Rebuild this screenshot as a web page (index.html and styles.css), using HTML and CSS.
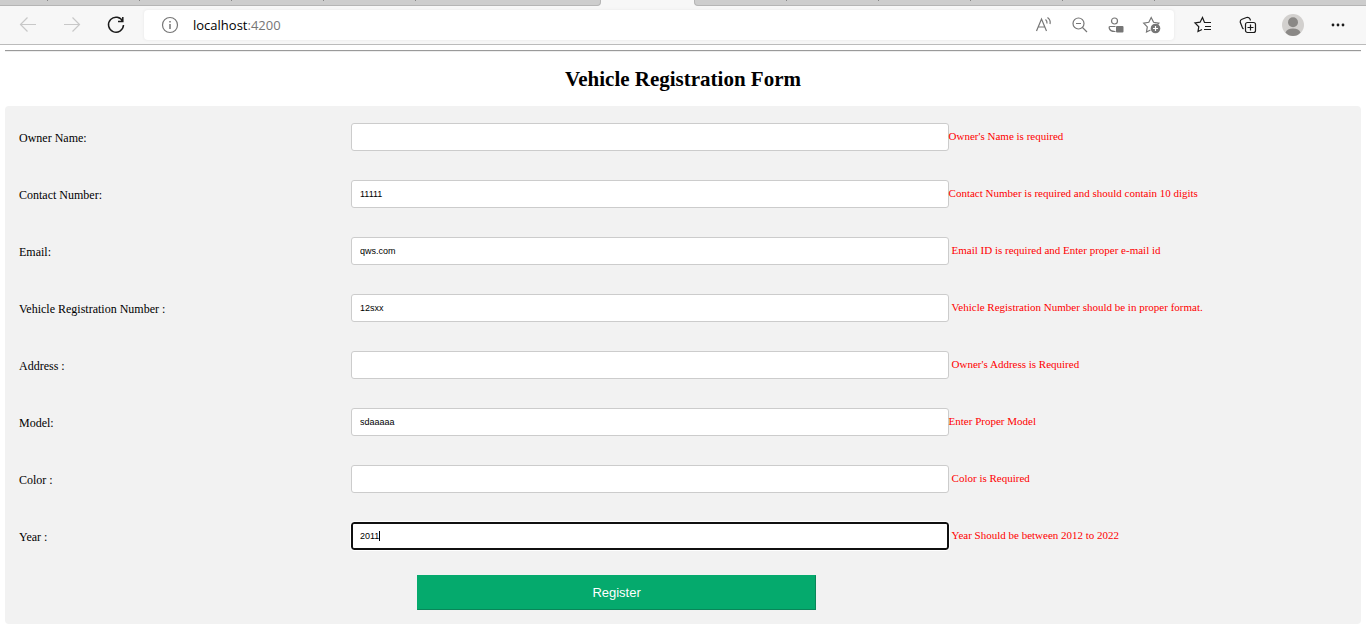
FILE: index.html
```html
<!DOCTYPE html>
<html lang="en">
<head>
<meta charset="utf-8">
<title>Vehicle Registration Form</title>
<link rel="stylesheet" href="styles.css">
</head>
<body>
<header class="browser">
  <div class="tabs">
    <div class="tab-group tab-group-left"><i class="tab tab-first"></i><i class="tab"></i><i class="tab"></i><i class="tab"></i><i class="tab"></i><i class="tab"></i></div>
    <div class="tab-active"></div>
    <div class="tab-group tab-group-right"><i class="tab"></i><i class="tab"></i><i class="tab"></i><i class="tab"></i><i class="tab"></i></div>
  </div>
  <div class="toolbar">
    <div class="nav">
      <button class="icon-btn muted" type="button" aria-label="Back"><svg width="20" height="20" viewBox="0 0 20 20"><path d="M18 9.500H2.500M9.500 2.500L2.500 9.500L9.500 16.500"/></svg></button>
      <button class="icon-btn muted" type="button" aria-label="Forward"><svg width="20" height="20" viewBox="0 0 20 20"><path d="M2 9.500H17.500M10.500 2.500L17.500 9.500L10.500 16.500"/></svg></button>
      <button class="icon-btn" type="button" aria-label="Refresh"><svg class="refresh" width="20" height="20" viewBox="0 0 20 20"><path d="M16.800 6.500A7.500 7.500 0 1 0 17.500 10M12 6.500H16.800V2"/></svg></button>
    </div>
    <div class="address">
      <button class="icon-btn gray" type="button" aria-label="Site information"><svg width="20" height="20" viewBox="0 0 20 20"><circle cx="10" cy="10" r="7.500"/><path d="M10 9V14M10 6V7.500" stroke-width="1.500"/></svg></button>
      <span class="url">localhost<span class="port">:4200</span></span>
      <div class="address-icons">
        <button class="icon-btn gray" type="button" aria-label="Read aloud"><svg width="20" height="20" viewBox="0 0 20 20"><path d="M2.500 16L7.500 4L12.500 16M4.200 12H10.800M11.500 4.500Q13.300 6 13 8.500M13.500 2.500Q17 5 16 9"/></svg></button>
        <button class="icon-btn gray" type="button" aria-label="Zoom out"><svg width="20" height="20" viewBox="0 0 20 20"><circle cx="8.500" cy="8.500" r="5.500"/><path d="M12.500 12.500L17 17M6 8.500H11"/></svg></button>
        <button class="icon-btn gray" type="button" aria-label="Account notice"><svg width="20" height="20" viewBox="0 0 20 20"><circle cx="8.500" cy="6" r="3"/><path d="M9.500 11.500H4Q3 11.500 3.200 13Q4 16.700 9.500 16.500"/><rect class="fill" x="10" y="11" width="7.500" height="6.500" rx="1"/></svg></button>
        <button class="icon-btn gray" type="button" aria-label="Add to favorites"><svg width="20" height="20" viewBox="0 0 20 20"><path d="M8.500 15L4.500 17L5.300 11.900L1.700 8.200L6.800 7.300L9.200 2.500L11.600 7.300L16.800 8.200L15.500 9.500"/><circle class="fill" cx="13.500" cy="13.500" r="4.800"/><path class="white" d="M13.500 11V16M11 13.500H16"/></svg></button>
      </div>
    </div>
    <div class="tools">
      <button class="icon-btn" type="button" aria-label="Favorites"><svg width="20" height="20" viewBox="0 0 20 20"><path d="M9 14.500L5 16.500L5.800 11.700L2 8L7.100 7.200L9.500 2.500L11.500 7.500H18M12 11.500H18M11 14.500H18"/></svg></button>
      <button class="icon-btn" type="button" aria-label="Collections"><svg width="20" height="20" viewBox="0 0 20 20"><rect x="7.500" y="7.500" width="10" height="10" rx="2"/><path d="M12.500 9.500V15.500M9.500 12.500H15.500M5.500 14L4.500 13L2.200 7Q2 5 4 4.200L8.500 2.500Q11 2 12 4L12.500 5.500"/></svg></button>
      <button class="icon-btn avatar" type="button" aria-label="Profile"><svg width="22" height="22" viewBox="0 0 22 22"><circle cx="11" cy="11" r="11" fill="#d2d0ce"/><circle cx="11" cy="8.300" r="5" fill="#8a8886"/><path d="M3.500 18.500Q5 14.500 11 14.500T18.500 18.500Q15.500 22 11 22T3.500 18.500Z" fill="#8a8886"/></svg></button>
      <button class="icon-btn" type="button" aria-label="Settings and more"><svg class="dots" width="20" height="20" viewBox="0 0 20 20"><circle cx="5" cy="10" r="1.400"/><circle cx="10" cy="10" r="1.400"/><circle cx="15" cy="10" r="1.400"/></svg></button>
    </div>
  </div>
</header>
<main class="page">
  <hr class="rule">
  <h1 class="title">Vehicle Registration Form</h1>
  <form class="form" novalidate>
    <div class="row"><label class="label" for="owner">Owner Name:</label><input class="field" id="owner" type="text"><span class="error">Owner's Name is required</span></div>
    <div class="row"><label class="label" for="contact">Contact Number:</label><input class="field" id="contact" type="text" value="11111"><span class="error">Contact Number is required and should contain 10 digits</span></div>
    <div class="row"><label class="label" for="email">Email:</label><input class="field" id="email" type="text" value="qws.com"><span class="error spaced">Email ID is required and Enter proper e-mail id</span></div>
    <div class="row"><label class="label" for="regno">Vehicle Registration Number :</label><input class="field" id="regno" type="text" value="12sxx"><span class="error spaced">Vehicle Registration Number should be in proper format.</span></div>
    <div class="row"><label class="label" for="address">Address :</label><input class="field" id="address" type="text"><span class="error spaced">Owner's Address is Required</span></div>
    <div class="row"><label class="label" for="model">Model:</label><input class="field" id="model" type="text" value="sdaaaaa"><span class="error">Enter Proper Model</span></div>
    <div class="row"><label class="label" for="color">Color :</label><input class="field" id="color" type="text"><span class="error spaced">Color is Required</span></div>
    <div class="row"><label class="label" for="year">Year :</label><div class="field-wrap"><input class="field field-active" id="year" type="text" value="2011"><span class="caret"></span></div><span class="error spaced">Year Should be between 2012 to 2022</span></div>
    <button class="submit" type="submit">Register</button>
  </form>
</main>
</body>
</html>
```
FILE: styles.css
```css
* { box-sizing: border-box; }
body { margin: 0; background: #fff; color: #000; font-family: "Liberation Serif", "Times New Roman", serif; }

/* Browser bar */
.browser { background: #f7f7f7; border-bottom: 1px solid #bbb; }
.tabs { display: flex; height: 6px; }
.tab-group { display: flex; background: #cdcdcd; border-bottom: 1px solid #b5b5b5; }
.tab-group-left { flex: 0 0 44%; border-right: 1px solid #b5b5b5; border-bottom-right-radius: 4px; }
.tab-group-right { flex: 1; border-left: 1px solid #b5b5b5; border-bottom-left-radius: 4px; }
.tab { width: 92px; height: 1px; border-right: 1px solid #888; }
.tab-first { width: 48px; }
.tab-group-left .tab:last-child { border-right: 0; }
.tab-active { width: 93px; }
.toolbar { display: flex; align-items: center; padding: 4px 16px; }
.nav { display: flex; gap: 20px; padding-right: 16px; }
.icon-btn { display: flex; align-items: center; justify-content: center; width: 24px; height: 24px; padding: 0; border: 0; background: none; color: #1b1b1b; }
.icon-btn svg { fill: none; stroke: currentColor; stroke-width: 1.2; }
.icon-btn .fill { fill: currentColor; stroke: none; }
.icon-btn .white { stroke: #fff; }
.icon-btn .refresh { stroke-width: 1.5; }
.icon-btn .dots { fill: currentColor; stroke: none; }
.icon-btn.avatar svg { stroke: none; }
.icon-btn.muted { color: #c8c8c8; }
.icon-btn.gray { color: #767676; }
.address { display: flex; flex: 1; align-items: center; height: 30px; padding: 0 10px 0 14px; background: #fff; border-radius: 4px; box-shadow: 0 0 3px #e4e4e4; }
.url { flex: 1; padding-left: 11px; font: 13px/20px "Open Sans", "Noto Sans", sans-serif; }
.port { color: #767676; }
.address-icons { display: flex; gap: 12px; }
.tools { display: flex; gap: 21px; padding-left: 17px; }

/* Form */
.page { padding: 5px 5px 12px; }
.rule { height: 2px; margin: 0; border: 0; border-top: 1px solid #9a9a9a; border-bottom: 1px solid #eee; }
.title { margin: 14px 0; font-size: 21px; line-height: 26px; text-align: center; }
.form { padding: 17px 14px 14px; background: #f2f2f2; border-radius: 4px; }
.row { display: grid; grid-template-columns: 25% 45% 1fr; align-items: center; height: 28px; margin-bottom: 29px; }
.label { padding-top: 2px; font-size: 12px; line-height: 16px; }
.field { width: 100%; height: 28px; padding: 0 8px; border: 1px solid #ccc; border-radius: 3px; background: #fff; color: #000; font: 9px "Liberation Sans", Arial, sans-serif; }
.field-wrap { position: relative; }
.field-active { display: block; padding: 0 7px; border: 2px solid #101010; outline: 1px solid #fff; }
.caret { position: absolute; left: 28px; top: 9px; width: 1px; height: 10px; background: #000; }
.error { padding-bottom: 2px; color: #f00; font-size: 11px; line-height: 14px; white-space: nowrap; }
.spaced { padding-left: 3px; }
.submit { display: block; width: 30%; height: 35px; margin: -4px 0 0 30%; padding: 0; border: 1px solid; border-color: #05aa6d #0a8659 #0a8659 #05aa6d; background: #05aa6d; color: #fff; font: 13px "Liberation Sans", Arial, sans-serif; }
```
